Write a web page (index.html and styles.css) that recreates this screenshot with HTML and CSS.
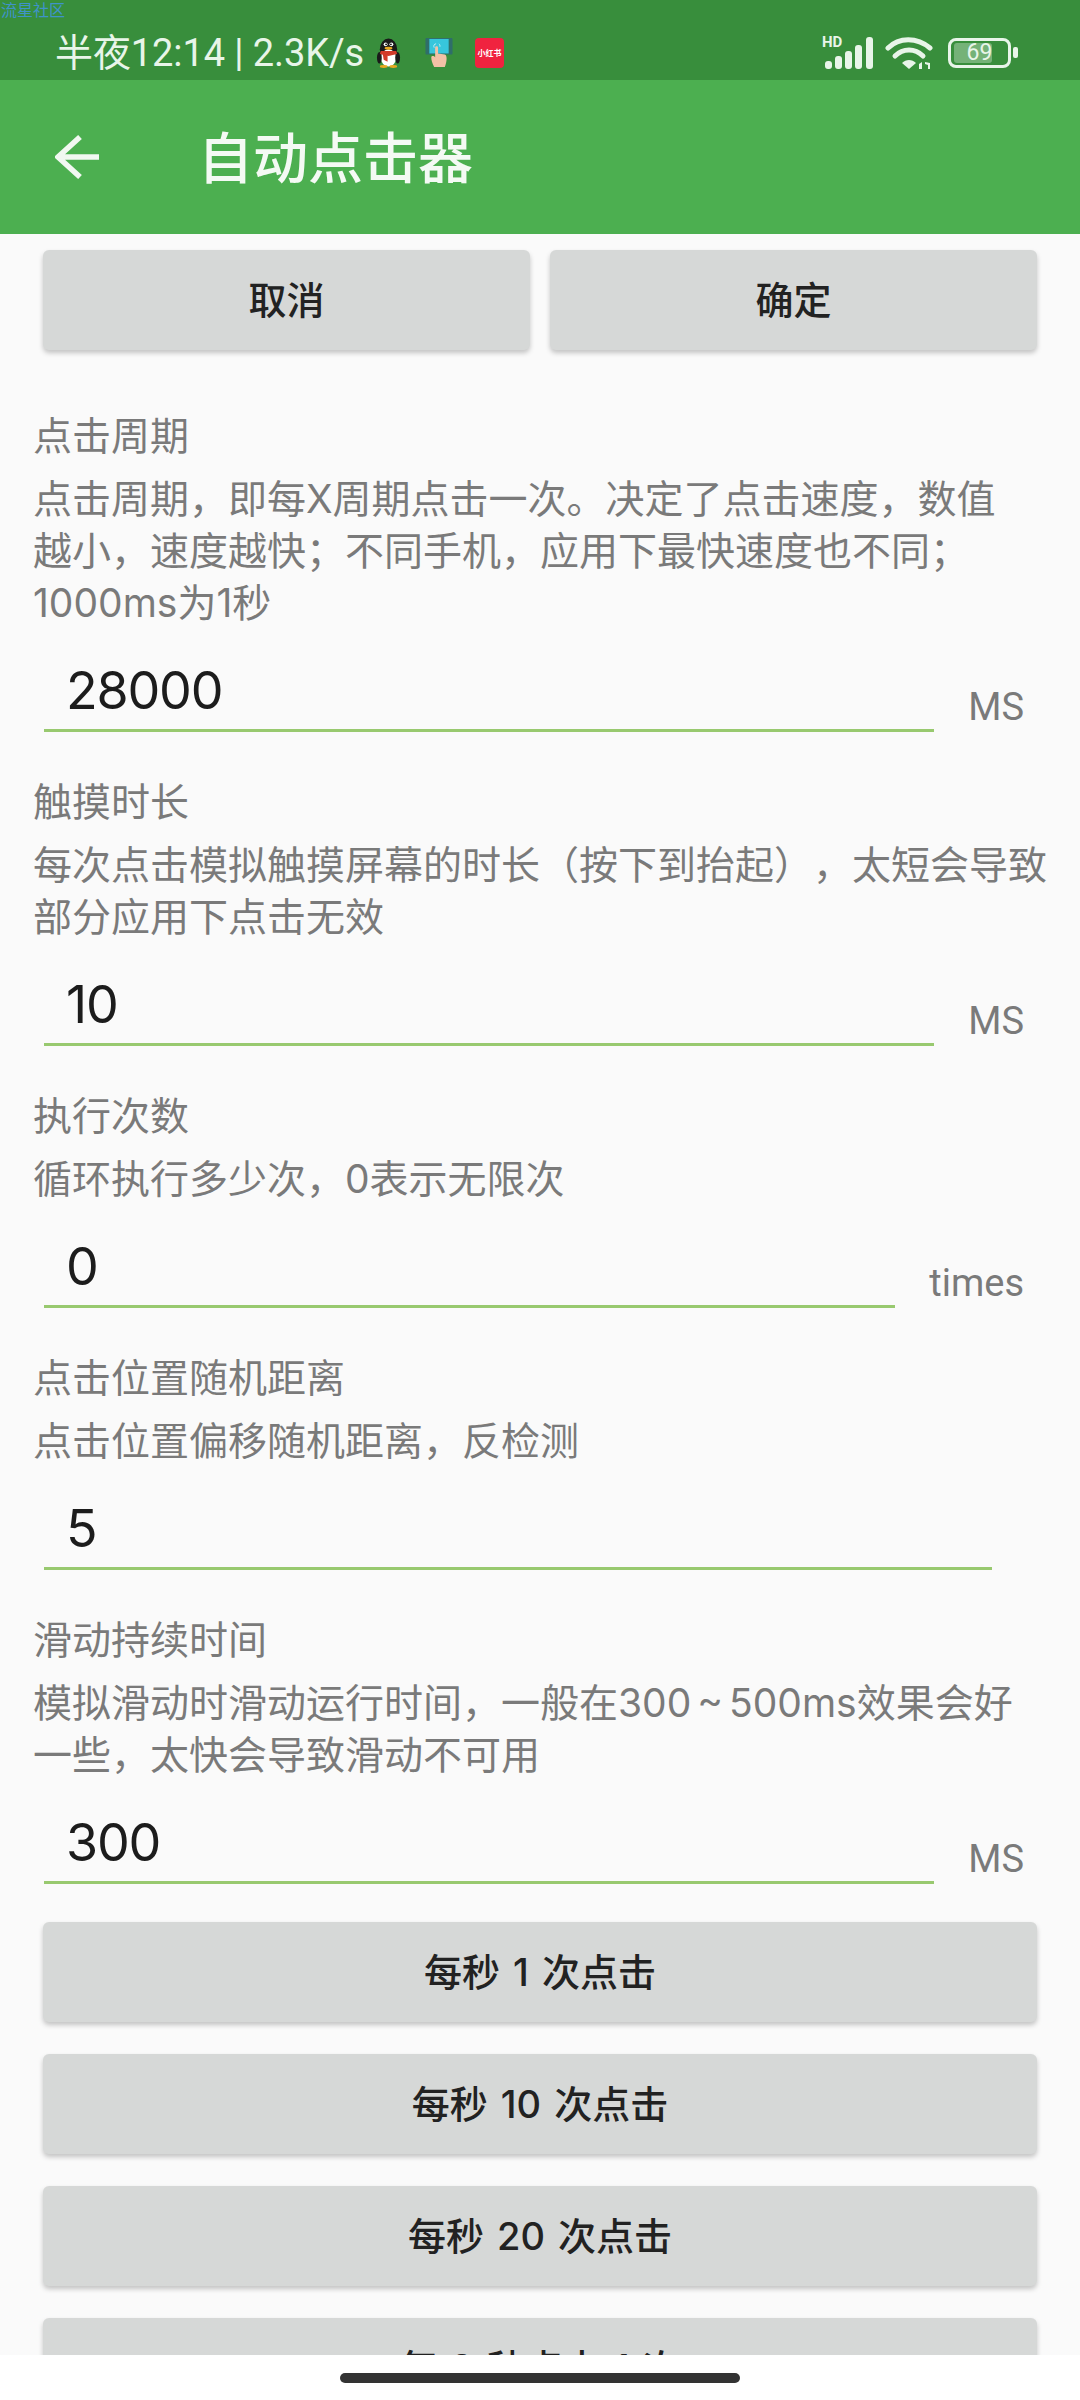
FILE: index.html
```html
<!DOCTYPE html>
<html lang="zh-CN">
<head>
<meta charset="utf-8">
<title>自动点击器</title>
<link rel="stylesheet" href="styles.css">
</head>
<body>
<div class="screen">
  <span class="watermark">流星社区</span>
  <header class="status">
    <div class="status-left">
      <span class="clock">半夜12:14 | 2.3K/s</span>
      <svg class="ico-qq" viewBox="0 0 26 32"><ellipse cx="13" cy="12" rx="9" ry="11" fill="#1a1a1a"/><ellipse cx="13" cy="21" rx="8" ry="9" fill="#fff"/><ellipse cx="3.5" cy="21" rx="2.5" ry="6" fill="#1a1a1a"/><ellipse cx="22.500" cy="21" rx="2.500" ry="6" fill="#1a1a1a"/><path d="M5 14h16l1 3-9 2-9-2z" fill="#d23a2a"/><path d="M7 17h5v8l-4-2z" fill="#d23a2a"/><ellipse cx="13" cy="11" rx="4" ry="1.500" fill="#e8a820"/><circle cx="10" cy="7" r="2" fill="#fff"/><circle cx="16" cy="7" r="2" fill="#fff"/><circle cx="10.500" cy="7" r="1" fill="#111"/><circle cx="15.500" cy="7" r="1" fill="#111"/><ellipse cx="8" cy="30" rx="4" ry="1.500" fill="#e8a820"/><ellipse cx="18" cy="30" rx="4" ry="1.500" fill="#e8a820"/></svg>
      <svg class="ico-touch" viewBox="0 0 28 30"><rect width="28" height="17" rx="1" fill="#2f6e6a"/><rect x="4" y="1" width="20" height="15" fill="#37c6dc"/><path d="M9 30c-2-4-3-7-3-10 0-2 3-2 4 0V10c0-2 3-2 3 0v6l7 1c3 1 2 8 0 13z" fill="#f2c1a6"/><path d="M11 6c-2 0-3 2-2 4M14 6c1 1 1 2 1 3" stroke="#bfeef5" stroke-width="1" fill="none"/></svg>
      <span class="ico-red">小红书</span>
    </div>
    <div class="status-right">
      <svg class="ico-signal" viewBox="0 0 50 34"><text x="-2" y="10.500" class="hd">HD</text><rect x="1" y="25" width="7" height="8" rx="3" fill="#e8f5e9"/><rect x="11" y="20" width="7" height="13" rx="3" fill="#e8f5e9"/><rect x="21" y="15" width="7" height="18" rx="3" fill="#e8f5e9"/><rect x="31" y="9" width="7" height="24" rx="3" fill="#e8f5e9"/><rect x="42" y="1" width="7" height="32" rx="3" fill="#e8f5e9"/></svg>
      <svg class="ico-wifi" viewBox="0 0 48 34"><path d="M3 12C14 1 32 1 45 12" stroke="#e8f5e9" stroke-width="5" fill="none" stroke-linecap="round"/><path d="M10 20C18 12 30 12 38 20" stroke="#e8f5e9" stroke-width="5" fill="none" stroke-linecap="round"/><path d="M17 27c4-4 10-4 14 0l-7 6z" fill="#e8f5e9"/><path d="M34 33v-5l3-2v7zM40 26l5 1v6h-2v-4l-3-1z" fill="#e8f5e9"/></svg>
      <div class="battery"><div class="battery-body"><span class="battery-fill"></span><span class="battery-num">69</span></div><span class="battery-tip"></span></div>
    </div>
  </header>
  <div class="appbar">
    <svg class="back" viewBox="0 0 44 44"><path d="M3 22h41M25 2L3 22l22 20" stroke="#f1f8f1" stroke-width="5.500" fill="none"/></svg>
    <h1 class="title">自动点击器</h1>
  </div>
  <main class="content">
    <div class="btn-pair">
      <button class="btn">取消</button>
      <button class="btn">确定</button>
    </div>
    <section class="field first">
      <div class="label">点击周期</div>
      <p class="desc">点击周期，即每X周期点击一次。决定了点击速度，数值<br>越小，速度越快；不同手机，应用下最快速度也不同；<br>1000ms为1秒</p>
      <div class="input-row"><div class="input">28000</div><span class="unit">MS</span></div>
    </section>
    <section class="field">
      <div class="label">触摸时长</div>
      <p class="desc">每次点击模拟触摸屏幕的时长（按下到抬起），太短会导致<br>部分应用下点击无效</p>
      <div class="input-row"><div class="input">10</div><span class="unit">MS</span></div>
    </section>
    <section class="field">
      <div class="label">执行次数</div>
      <p class="desc">循环执行多少次，0表示无限次</p>
      <div class="input-row"><div class="input">0</div><span class="unit">times</span></div>
    </section>
    <section class="field">
      <div class="label">点击位置随机距离</div>
      <p class="desc">点击位置偏移随机距离，反检测</p>
      <div class="input-row"><div class="input full">5</div></div>
    </section>
    <section class="field">
      <div class="label">滑动持续时间</div>
      <p class="desc">模拟滑动时滑动运行时间，一般在300 ~ 500ms效果会好<br>一些，太快会导致滑动不可用</p>
      <div class="input-row"><div class="input">300</div><span class="unit">MS</span></div>
    </section>
    <div class="btn-stack">
      <button class="btn">每秒 1 次点击</button>
      <button class="btn">每秒 10 次点击</button>
      <button class="btn">每秒 20 次点击</button>
      <button class="btn">每 2 秒点击 1 次</button>
    </div>
  </main>
  <footer class="nav"><span class="handle"></span></footer>
</div>
</body>
</html>
```

FILE: styles.css
```css
* { box-sizing: border-box; }
html, body { margin: 0; padding: 0; }
body { font-family: "Noto Sans CJK SC", "Noto Sans", sans-serif; background: #fff; text-spacing-trim: space-all; }
.screen { position: relative; width: 1080px; height: 2400px; display: flex; flex-direction: column; overflow: hidden; background: #fff; }
.watermark { position: absolute; left: 1px; top: 0; font-size: 16px; line-height: 18px; color: #3f93c9; z-index: 2; }

.status { height: 80px; flex: none; background: #388e3c; display: flex; align-items: center; justify-content: space-between; padding: 0 62px 0 55px; color: #e8f5e9; }
.status-left { display: flex; align-items: center; margin-top: 25px; height: 54px; }
.clock { font-size: 38px; line-height: 54px; letter-spacing: -.1px; white-space: nowrap; font-family: Roboto, "Noto Sans CJK SC", sans-serif; }
.ico-qq { width: 25px; height: 32px; margin-left: 12px; }
.ico-touch { width: 28px; height: 29px; margin-left: 24px; }
.ico-red { width: 29px; height: 30px; margin-left: 22px; background: #f0233f; border-radius: 4px; color: #fff; font-size: 8px; font-weight: 700; line-height: 30px; text-align: center; white-space: nowrap; }
.status-right { display: flex; align-items: center; margin-top: 25px; height: 54px; }
.ico-signal { width: 50px; height: 34px; overflow: visible; }
.hd { font-size: 15px; font-weight: 700; fill: #e8f5e9; font-family: Roboto, sans-serif; }
.ico-wifi { width: 48px; height: 34px; margin-left: 11px; }
.battery { display: flex; align-items: center; margin-left: 15px; }
.battery-body { position: relative; width: 63px; height: 30px; border: 3px solid #e8f5e9; border-radius: 8px; display: flex; align-items: center; justify-content: center; }
.battery-fill { position: absolute; left: 3px; top: 2px; bottom: 2px; width: 38px; background: rgba(232,245,233,.35); border-radius: 3px; }
.battery-num { position: relative; font-size: 23px; line-height: 24px; font-family: Roboto, sans-serif; }
.battery-tip { width: 5px; height: 11px; margin-left: 2px; background: #e8f5e9; border-radius: 2px; }

.appbar { height: 154px; flex: none; background: #4caf50; display: flex; align-items: center; padding-left: 55px; }
.back { width: 44px; height: 44px; }
.title { margin: -7px 0 0 99px; font-size: 55px; line-height: 70px; font-weight: 500; color: #f4faf4; }

.content { flex: 1; min-height: 0; overflow: hidden; background: #fafafa; padding-top: 16px; }
.btn { display: block; height: 100px; border: 0; border-radius: 6px; background: #d6d8d7; box-shadow: 0 3px 5px rgba(0,0,0,.22); font: 500 38px/90px Inter, "Noto Sans CJK SC", sans-serif; word-spacing: 3px; color: #222; padding: 0; }
.btn-pair { display: grid; grid-template-columns: 487px 487px; gap: 20px; padding-left: 43px; }
.field { padding: 44px 0 0 33px; font-family: Inter, "Noto Sans CJK SC", sans-serif; }
.field.first { padding-top: 60px; }
.label { font-size: 39px; line-height: 52px; color: #7a7a7a; }
.desc { margin: 11px 0 0; font-size: 39px; line-height: 52px; word-spacing: -5px; color: #7a7a7a; white-space: nowrap; }
.input-row { height: 103px; display: flex; align-items: flex-end; padding-left: 11px; }
.input { flex: 1; height: 100px; border-bottom: 3px solid #98c96f; padding: 29px 0 0 22px; font-size: 52px; line-height: 60px; letter-spacing: -1.2px; color: #1c1c1c; font-family: Inter, sans-serif; }
.input.full { flex: none; width: 948px; }
.unit { flex: none; padding: 0 56px 0 34px; font-size: 38px; line-height: 50px; color: #7a7a7a; font-family: Roboto, sans-serif; }
.btn-stack { display: grid; grid-template-columns: 994px; row-gap: 32px; padding: 38px 0 0 43px; }

.nav { height: 45px; flex: none; background: #fff; display: flex; justify-content: center; padding-top: 18px; }
.handle { width: 400px; height: 10px; border-radius: 5px; background: #333; }
```
